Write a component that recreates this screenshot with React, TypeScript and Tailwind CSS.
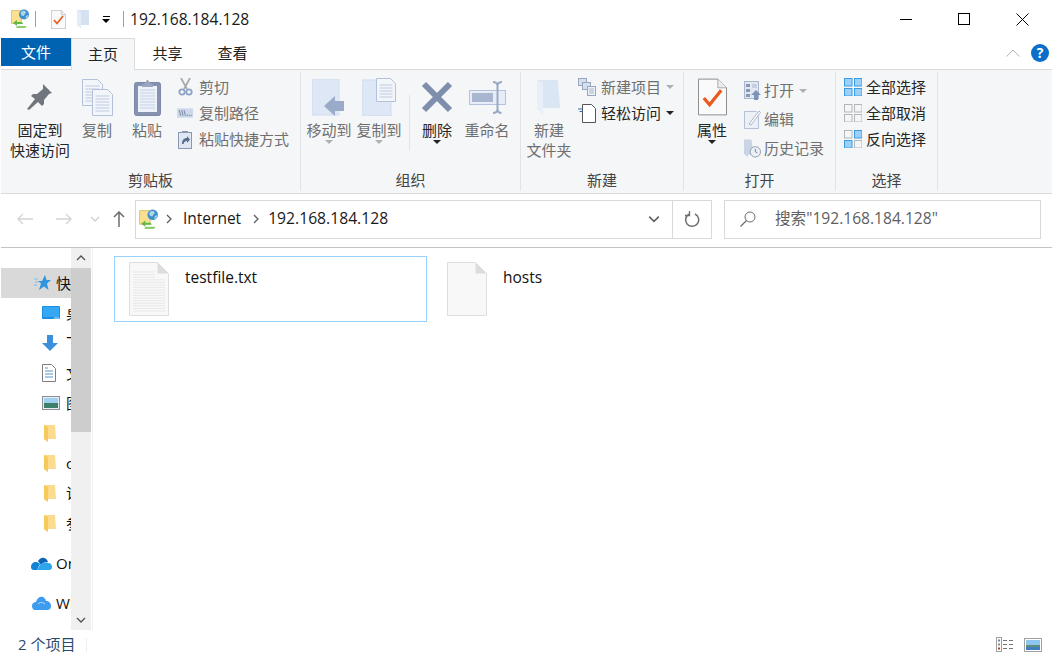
import React from "react";

const NetIcon = ({ s = 20 }: { s?: number }) => (
  <svg width={s} height={s} viewBox="0 0 20 20" className="shrink-0">
    <path d="M1.5 1.5h9l1 1v12h-10z" fill="#fbe08f" stroke="#d9bd6a" strokeWidth="0.8" />
    <circle cx="14" cy="5.5" r="5" fill="#3f8fc9" />
    <path d="M11 3c2-2 4-1 5 0 0 2-2 2-2 4-2 0-4-1-3-4z" fill="#a9d6ea" />
    <path d="M16 7c1-1 2-1 2.500-1-.5 2-2 3.500-3 3.500z" fill="#a9d6ea" />
    <path d="M3 14l4-3v2h5l1 2H7v2z" fill="#63b84a" />
    <path d="M7 17h10l-2 2H6z" fill="#8ccf6e" />
  </svg>
);
const Check = ({ w, h }: { w: number; h: number }) => (
  <svg width={w} height={h} viewBox="0 0 30 38" className="shrink-0">
    <path d="M.5.5h20l9 9v28H.5z" fill="#fafafa" stroke="#8a8a8a" />
    <path d="M20.500.5v9h9" fill="#ececec" stroke="#a8a8a8" />
    <path d="M6 20l6 7L24 12" fill="none" stroke="#ea5a1c" strokeWidth="3.400" />
  </svg>
);
const SmallFolder = ({ w = 13, h = 18 }: { w?: number; h?: number }) => (
  <svg width={w} height={h} viewBox="0 0 13 18" className="shrink-0">
    <path d="M0 0h12v15H4v3L0 15z" fill="#d6e2f2" />
    <path d="M0 0l4 2v16l-4-3z" fill="#e4ecf7" />
  </svg>
);
const Pin = () => (
  <svg width="28" height="28" viewBox="0 0 28 28">
    <path d="M17 1l9 9-3 1-5 6 0 4-2 2-4-4-9 8-2-1 8-10-4-3 2-2 4 0 6-5z" fill="#71757e" />
  </svg>
);
const Page = ({ x, y, w, h }: { x: number; y: number; w: number; h: number }) => (
  <g>
    <path d={`M${x} ${y}h${w - 5}l5 5v${h - 5}h-${w}z`} fill="#f2f5fa" stroke="#b3c2d9" />
    {Array.from({ length: Math.floor((h - 7) / 3) }).map((_, i) => (
      <path key={i} d={`M${x + 3} ${y + 6.5 + i * 3}h${w - 6}`} stroke="#bfcbe0" strokeWidth="1" />
    ))}
  </g>
);
const Copy = () => (
  <svg width="31" height="37" viewBox="0 0 31 37">
    <Page x={0.5} y={0.5} w={20} h={26} />
    <Page x={10.5} y={10.5} w={20} h={26} />
  </svg>
);
const Paste = () => (
  <svg width="27" height="37" viewBox="0 0 27 37">
    <rect x=".5" y="3.500" width="26" height="33" rx="2" fill="#8592b0" stroke="#7b88a8" />
    <rect x="4" y="7" width="19" height="26" fill="#edf2f9" />
    <path d="M6 11h15M6 14h15M6 17h15M6 20h15M6 23h15M6 26h15M6 29h15" stroke="#c5d1e6" />
    <path d="M8 6l3-2 2-3h1l2 3 3 2v2H8z" fill="#9aa6c1" />
  </svg>
);
const Scissors = () => (
  <svg width="15" height="18" viewBox="0 0 15 18" fill="none">
    <path d="M3 0l6 11M12 0L6 11" stroke="#a8a8a8" strokeWidth="1.700" />
    <circle cx="4" cy="14" r="2.700" stroke="#8fa3c4" strokeWidth="1.800" />
    <circle cx="11" cy="14" r="2.700" stroke="#8fa3c4" strokeWidth="1.800" />
  </svg>
);
const PathIcon = () => (
  <svg width="17" height="10" viewBox="0 0 17 10">
    <rect width="17" height="10" fill="#cdd8ea" />
    <path d="M2.500 2l1.500 6M5 2l1.500 6M7.500 2L9 8" stroke="#5c6b87" strokeWidth=".8" />
    <path d="M10.500 7.500h1M12.500 7.500h1M14.500 7.500h1" stroke="#5c6b87" />
  </svg>
);
const Shortcut = () => (
  <svg width="14" height="19" viewBox="0 0 14 19">
    <rect x=".5" y="2.500" width="13" height="16" fill="#dfe7f3" stroke="#8a98b5" />
    <path d="M4 2.500h6V1H4z" fill="#8a98b5" />
    <path d="M4 14c0-4 2-6 5-6V6l3 3.500L9 13v-2c-2 0-3 1-3.500 3z" fill="#5a6b8c" />
  </svg>
);
const MoveTo = () => (
  <svg width="34" height="37" viewBox="0 0 34 37">
    <path d="M0 0h27v36H0z" fill="#dde7f5" stroke="#cfdbee" />
    <path d="M12 27l11-10v5h9v10h-9v5z" fill="#99abc9" />
  </svg>
);
const CopyTo = () => (
  <svg width="34" height="38" viewBox="0 0 34 38">
    <path d="M0 2h29v36H0z" fill="#dde7f5" stroke="#cfdbee" />
    <g transform="translate(14 0)"><Page x={0.5} y={0.5} w={19} h={23} /></g>
  </svg>
);
const Del = () => (
  <svg width="32" height="32" viewBox="0 0 32 32">
    <path d="M3 3l26 26M29 3L3 29" stroke="#7f8ead" strokeWidth="6" />
  </svg>
);
const Rename = () => (
  <svg width="37" height="33" viewBox="0 0 37 33">
    <rect x=".5" y="9.500" width="36" height="14" fill="#e6edf7" stroke="#b3c3db" />
    <rect x="3" y="12" width="21" height="9" fill="#a8b7cf" />
    <path d="M24 1c3 0 4 1 4.500 3v25c.5 2 2 3 4 3M33 1c-3 0-4 1-4.500 3M28.500 29c-.5 2-2 3-4.500 3" fill="none" stroke="#9aa9c2" strokeWidth="2" />
  </svg>
);
const NewFolder = () => (
  <svg width="24" height="35" viewBox="0 0 24 35">
    <path d="M0 0h21l2 28H6v7L0 28z" fill="#dbe6f4" />
    <path d="M0 0l6 3v32l-6-7z" fill="#e9eff8" />
  </svg>
);
const NewItem = () => (
  <svg width="18" height="18" viewBox="0 0 18 18">
    <rect x=".5" y=".5" width="8" height="7" fill="#d5dfee" stroke="#98a7bf" />
    <rect x="4.500" y="4.500" width="8" height="7" fill="#d5dfee" stroke="#98a7bf" />
    <rect x="9.500" y="8.500" width="8" height="9" fill="#eef2f8" stroke="#98a7bf" />
    <path d="M11 11h5M11 13h5M11 15h5" stroke="#a8b6cc" />
  </svg>
);
const EasyAccess = () => (
  <svg width="18" height="19" viewBox="0 0 18 19">
    <path d="M4.500.5h9l4 4v14h-13z" fill="#fff" stroke="#555" />
    <path d="M0 5h4M1.500 7.500h3" stroke="#2a6fb5" />
  </svg>
);
const OpenI = () => (
  <svg width="17" height="19" viewBox="0 0 17 19">
    <rect x=".5" y=".5" width="14" height="17" fill="#e2e8f2" stroke="#aab7cc" />
    <rect x="2" y="3" width="4" height="3" fill="#8a99b3" /><rect x="2" y="8" width="4" height="3" fill="#8a99b3" /><rect x="2" y="13" width="4" height="3" fill="#8a99b3" />
    <path d="M8 4h5M8 6h5" stroke="#aab7cc" />
    <path d="M12 9l5 5h-3v5h-4v-5H7z" fill="#7c93b8" />
  </svg>
);
const EditI = () => (
  <svg width="17" height="19" viewBox="0 0 17 19">
    <path d="M.5 1.500h12l2 2v15H.5z" fill="#edf1f7" stroke="#b5c1d4" />
    <path d="M5 14L15 1l1.500 1.500L7 15z" fill="#fff" stroke="#a8b6cc" />
  </svg>
);
const HistI = () => (
  <svg width="18" height="19" viewBox="0 0 18 19">
    <path d="M0 0h8l2 16H4v3l-4-4z" fill="#c9d4e6" />
    <circle cx="12" cy="13" r="5.500" fill="#eceff4" stroke="#8d9ab0" />
    <path d="M12 10v3l2 1" fill="none" stroke="#6d7a90" />
  </svg>
);
const SelGrid = ({ on }: { on: boolean[] }) => (
  <svg width="18" height="18" viewBox="0 0 18 18">
    {[[0, 0], [10, 0], [0, 10], [10, 10]].map(([x, y], i) => (
      <rect key={i} x={x + 0.5} y={y + 0.5} width="7.500" height="7.500" fill={on[i] ? "#9dd0f7" : "#f5f6f7"} stroke={on[i] ? "#3a9ce4" : "#b5b5b5"} />
    ))}
  </svg>
);
const Caret = ({ c = "#a0a0a0" }: { c?: string }) => (
  <svg width="8" height="4" viewBox="0 0 8 4" className="shrink-0"><path d="M0 0h8L4 4z" fill={c} /></svg>
);

const Large = ({ icon, lines, w, dim = true, caret }: { icon: React.ReactNode; lines: string[]; w: number; dim?: boolean; caret?: string }) => (
  <div className="flex flex-col items-center shrink-0" style={{ width: w }}>
    <div className="flex items-center justify-center h-[46px]">{icon}</div>
    {lines.map((l) => (
      <div key={l} className={`h-5 leading-5 whitespace-nowrap ${dim ? "text-[#6f6f6f]" : "text-[#262626]"}`}>{l}</div>
    ))}
    {caret && <Caret c={caret} />}
  </div>
);
const Small = ({ icon, text, dim = true, h = 26, iw, gap, caret }: { icon: React.ReactNode; text: string; dim?: boolean; h?: number; iw: number; gap: number; caret?: string }) => (
  <div className="flex items-center whitespace-nowrap" style={{ height: h }}>
    <div className="flex items-center justify-center shrink-0" style={{ width: iw, marginRight: gap }}>{icon}</div>
    <span className={dim ? "text-[#6f6f6f]" : "text-[#262626]"}>{text}</span>
    {caret && <span className="ml-[5px]"><Caret c={caret} /></span>}
  </div>
);
const Group = ({ w, label, children }: { w: number; label: string; children: React.ReactNode }) => (
  <div className="flex flex-col border-r border-[#e1e3e6] shrink-0 my-[2px]" style={{ width: w }}>
    <div className="flex flex-1 pt-[2px] min-h-0">{children}</div>
    <div className="h-[22px] leading-[22px] text-center text-[#444]">{label}</div>
  </div>
);

const Chevron = ({ d, c = "#5f5f5f", s = 10 }: { d: string; c?: string; s?: number }) => (
  <svg width={s} height={s} viewBox="0 0 10 10" fill="none" className="shrink-0"><path d={d} stroke={c} strokeWidth="1.300" /></svg>
);
const Arrow = ({ flip, c }: { flip?: boolean; c: string }) => (
  <svg width="16" height="12" viewBox="0 0 16 12" fill="none" className={flip ? "rotate-180" : ""}>
    <path d="M1 6h15M6 1L1 6l5 5" stroke={c} strokeWidth="1.300" />
  </svg>
);

const NavRow = ({ icon, text, active, left = 41, iw = 24 }: { icon?: React.ReactNode; text?: string; active?: boolean; left?: number; iw?: number }) => (
  <div className={`h-[30px] flex items-center whitespace-nowrap shrink-0 ${active ? "bg-[#d9d9d9]" : ""}`} style={{ paddingLeft: left }}>
    <div className="shrink-0 flex items-center" style={{ width: iw }}>{icon}</div>
    <span className="text-[#111]">{text}</span>
  </div>
);
const NavFolder = () => (
  <svg width="12" height="17" viewBox="0 0 12 17">
    <path d="M0 0h11l1 14H4v3l-4-3z" fill="#fbdc8e" />
    <path d="M0 0l4 2v15l-4-3z" fill="#f5c95c" />
  </svg>
);
const Star = () => (
  <svg width="17" height="16" viewBox="0 0 17 16">
    <path d="M11 0l1.500 5H17l-4 3.500L14.500 15 10 11.500 5 15l2-6.500L4 6h4z" fill="#2f95dc" />
    <path d="M0 4h4M1 7h3M0 10h3" stroke="#7cc0ee" />
  </svg>
);
const Desktop = () => (
  <svg width="18" height="14" viewBox="0 0 18 14"><rect width="18" height="13" rx="1" fill="#1c8fe3" /><rect x="1" y="1" width="16" height="10" fill="#35a8f5" /><path d="M12 12h5" stroke="#cbe6fa" /></svg>
);
const Down = () => (
  <svg width="16" height="16" viewBox="0 0 16 16"><path d="M5 0h6v8h5l-8 8-8-8h5z" fill="#3b8fdd" /></svg>
);
const Doc = () => (
  <svg width="14" height="18" viewBox="0 0 14 18"><path d="M.5.5h9l4 4v13H.5z" fill="#fff" stroke="#7d7d7d" /><path d="M3 4h3M3 7h8M3 10h8M3 13h8" stroke="#5a93c9" /></svg>
);
const Pic = () => (
  <svg width="18" height="14" viewBox="0 0 18 14"><rect x=".5" y=".5" width="17" height="13" fill="#e6eef8" stroke="#8f8f8f" /><rect x="2" y="2" width="14" height="5" fill="#9fd0f0" /><rect x="2" y="7" width="14" height="5" fill="#3e7f6a" /></svg>
);
const OneDrive = () => (
  <svg width="21" height="13" viewBox="0 0 21 13"><path d="M7 4c2-4 8-5 10 1-4 0-6 1-7 3z" fill="#0a64b8" /><path d="M0 10c0-3 2-5 5-5 2 0 3 1 4 2l-3 6H3c-2 0-3-1-3-3z" fill="#1284d8" /><path d="M6 13l3-5c2-2 5-3 8-2 3 0 4 2 4 4 0 2-1 3-3 3z" fill="#2ea6ec" /></svg>
);
const Wps = () => (
  <svg width="19" height="14" viewBox="0 0 19 14"><path d="M0 10c0-3 2-4 4-4 1-4 4-6 7-5 2 1 3 3 3 4 3 0 5 2 5 5s-2 4-4 4H3c-2 0-3-2-3-4z" fill="#3d9bf0" /><path d="M6 8c2-2 5-2 7 0" stroke="#bfe0fb" fill="none" /></svg>
);
const FileIcon = ({ lines }: { lines?: boolean }) => (
  <svg width="40" height="54" viewBox="0 0 40 54" className="shrink-0">
    <path d="M.5.5h28l11 11v42H.5z" fill="#f8f8f9" stroke="#dedede" />
    <path d="M28.500.5v11h11z" fill="#dcdcdc" />
    {lines && Array.from({ length: 16 }).map((_, i) => <path key={i} d={`M4 ${10 + i * 2.6}h${i < 3 ? 22 : 32}`} stroke="#e8e8e8" />)}
  </svg>
);

const FileItem = ({ text, selected, lines }: { text: string; selected?: boolean; lines?: boolean }) => (
  <div className={`w-[313px] h-[66px] border flex items-start pl-[14px] pt-[5px] shrink-0 ${selected ? "border-[#99d1ff]" : "border-transparent"}`}>
    <FileIcon lines={lines} />
    <span className="ml-4 mt-[4px] text-[15.500px] leading-[22px] text-[#111]">{text}</span>
  </div>
);

export default function App() {
  return (
    <div className="w-[1053px] h-[659px] overflow-hidden bg-white flex flex-col text-[15px] px-px text-[#222] [font-family:'Open_Sans','Noto_Sans_CJK_SC',sans-serif]">
      {/* title bar */}
      <div className="h-[38px] flex items-center shrink-0">
        <div className="ml-[9px]"><NetIcon /></div>
        <div className="ml-[5px] w-px h-4 bg-[#a0a0a0]" />
        <div className="ml-[15px]"><Check w={15} h={19} /></div>
        <div className="ml-[11px]"><SmallFolder /></div>
        <div className="ml-[12px] flex flex-col items-center gap-[2px]"><div className="w-[7px] h-px bg-black" /><Caret c="#000" /></div>
        <div className="ml-[13px] w-px h-4 bg-[#a0a0a0]" />
        <div className="ml-[6px] pt-px text-[15.600px] text-[#1a1a1a]">192.168.184.128</div>
        <div className="ml-auto flex items-center mr-px">
          <div className="w-[58px] flex justify-center"><div className="w-3 h-px bg-black" /></div>
          <div className="w-[58px] flex justify-center"><div className="w-3 h-3 border border-black" /></div>
          <div className="w-[58px] flex justify-center">
            <svg width="13" height="13" viewBox="0 0 13 13"><path d="M.5.5l12 12M12.500.5l-12 12" stroke="#000" /></svg>
          </div>
        </div>
      </div>
      {/* tabs */}
      <div className="h-[32px] flex shrink-0 border-b border-[#dadbdc] relative">
        <div className="w-[70px] h-[28px] bg-[#0063b1] text-white text-center leading-[28px]">文件</div>
        <div className="w-[64px] h-[32px] bg-[#f5f6f7] border border-b-0 border-[#dadbdc] text-center leading-[30px] text-[#222]">主页</div>
        <div className="w-[65px] text-center leading-[30px]">共享</div>
        <div className="w-[65px] text-center leading-[30px]">查看</div>
        <div className="ml-auto flex items-center h-[30px] pr-[3px]">
          <svg width="14" height="8" viewBox="0 0 14 8" fill="none"><path d="M.5 7.500L7 1l6.500 6.500" stroke="#b5b5b5" /></svg>
          <div className="ml-[11px] w-[18px] h-[18px] rounded-full bg-[#0b6fc9] text-white text-[14px] font-bold text-center leading-[18px]">?</div>
        </div>
      </div>
      {/* ribbon */}
      <div className="h-[124px] flex bg-[#f5f6f7] border-b border-[#dadbdc] shrink-0">
        <Group w={300} label="剪贴板">
          <div className="pl-[9px] flex">
            <Large w={60} dim={false} icon={<Pin />} lines={["固定到", "快速访问"]} />
            <div className="w-[7px]" />
            <Large w={40} icon={<Copy />} lines={["复制"]} />
            <div className="w-[10px]" />
            <Large w={40} icon={<Paste />} lines={["粘贴"]} />
          </div>
          <div className="ml-[10px] flex flex-col">
            <Small icon={<Scissors />} text="剪切" iw={16} gap={6} />
            <Small icon={<PathIcon />} text="复制路径" iw={16} gap={6} />
            <Small icon={<Shortcut />} text="粘贴快捷方式" iw={16} gap={6} />
          </div>
        </Group>
        <Group w={220} label="组织">
          <div className="pl-[3px] flex">
            <Large w={50} icon={<MoveTo />} lines={["移动到"]} caret="#b0b0b0" />
            <Large w={50} icon={<CopyTo />} lines={["复制到"]} caret="#b0b0b0" />
            <div className="mx-[5px] mt-[21px] w-px h-[56px] bg-[#e1e3e6]" />
            <Large w={44} dim={false} icon={<Del />} lines={["删除"]} caret="#222" />
            <div className="w-[3px]" />
            <Large w={50} icon={<Rename />} lines={["重命名"]} />
          </div>
        </Group>
        <Group w={163} label="新建">
          <div className="pl-[5px] flex">
            <Large w={46} icon={<NewFolder />} lines={["新建", "文件夹"]} />
            <div className="ml-[6px] flex flex-col">
              <Small icon={<NewItem />} text="新建项目" iw={18} gap={5} caret="#b0b0b0" />
              <Small icon={<EasyAccess />} text="轻松访问" dim={false} iw={18} gap={5} caret="#222" />
            </div>
          </div>
        </Group>
        <Group w={152} label="打开">
          <div className="pl-[5px] flex">
            <Large w={46} dim={false} icon={<Check w={29} h={38} />} lines={["属性"]} caret="#222" />
            <div className="ml-[9px] flex flex-col pt-[2px]">
              <Small icon={<OpenI />} text="打开" h={29} iw={17} gap={3} caret="#b0b0b0" />
              <Small icon={<EditI />} text="编辑" h={29} iw={17} gap={3} />
              <Small icon={<HistI />} text="历史记录" h={29} iw={17} gap={3} />
            </div>
          </div>
        </Group>
        <Group w={102} label="选择">
          <div className="pl-[8px] flex flex-col">
            <Small icon={<SelGrid on={[true, true, true, true]} />} text="全部选择" dim={false} iw={18} gap={4} />
            <Small icon={<SelGrid on={[false, false, false, false]} />} text="全部取消" dim={false} iw={18} gap={4} />
            <Small icon={<SelGrid on={[false, true, true, false]} />} text="反向选择" dim={false} iw={18} gap={4} />
          </div>
        </Group>
      </div>
      {/* nav */}
      <div className="h-[54px] flex items-center shrink-0 border-b border-[#c4c4c4] pb-[3px]">
        <div className="w-[134px] flex items-center shrink-0">
          <div className="ml-[16px]"><Arrow c="#d4d4d4" /></div>
          <div className="ml-[23px]"><Arrow flip c="#d4d4d4" /></div>
          <div className="ml-[18px]"><Chevron d="M1 3l4 4 4-4" c="#d0d0d0" /></div>
          <svg width="12" height="16" viewBox="0 0 12 16" fill="none" className="ml-[13px]"><path d="M6 16V1M1 6l5-5 5 5" stroke="#6d6d6d" strokeWidth="1.500" /></svg>
        </div>
        <div className="w-[577px] h-[39px] border border-[#d9d9d9] flex items-center shrink-0">
          <div className="ml-[2px]"><NetIcon s={21} /></div>
          <div className="ml-[5px]"><Chevron d="M3 1l4 4-4 4" /></div>
          <span className="ml-[9px] text-[15.500px] text-[#1a1a1a]">Internet</span>
          <div className="ml-[10px]"><Chevron d="M3 1l4 4-4 4" /></div>
          <span className="ml-[7px] text-[15.700px] text-[#1a1a1a]">192.168.184.128</span>
          <div className="ml-auto mr-[12px]"><Chevron s={12} d="M1 3l4 4 4-4" c="#5f5f5f" /></div>
          <div className="w-[39px] h-full border-l border-[#d9d9d9] flex items-center justify-center">
            <svg width="16" height="17" viewBox="0 0 16 17" fill="none"><path d="M5 3.200A6.500 6.500 0 1 0 11 3" stroke="#6d6d6d" strokeWidth="1.500" /><path d="M5.500 0v4.500H1" stroke="#6d6d6d" strokeWidth="1.300" /></svg>
          </div>
        </div>
        <div className="ml-[12px] w-[317px] h-[39px] border border-[#d9d9d9] flex items-center shrink-0">
          <svg width="16" height="16" viewBox="0 0 16 16" fill="none" className="ml-[15px]"><circle cx="10" cy="6" r="5" stroke="#6d6d6d" /><path d="M6.500 9.500L.5 15.500" stroke="#6d6d6d" strokeWidth="1.200" /></svg>
          <span className="ml-[19px] text-[#5f5f5f] text-[15.600px]">搜索"192.168.184.128"</span>
        </div>
      </div>
      {/* body */}
      <div className="flex-1 flex min-h-0">
        <div className="w-[92px] flex shrink-0 border-r border-[#f0f0f0]">
          <div className="w-[70px] overflow-hidden pt-[20px] flex flex-col shrink-0">
            <NavRow active left={33} iw={22} icon={<Star />} text="快速访问" />
            <NavRow icon={<Desktop />} text="桌面" />
            <NavRow icon={<Down />} text="下载" />
            <NavRow icon={<Doc />} text="文档" />
            <NavRow icon={<Pic />} text="图片" />
            <NavRow left={43} iw={22} icon={<NavFolder />} text="" />
            <NavRow left={43} iw={22} icon={<NavFolder />} text="code" />
            <NavRow left={43} iw={22} icon={<NavFolder />} text="论文" />
            <NavRow left={43} iw={22} icon={<NavFolder />} text="参考" />
            <div className="h-[10px] shrink-0" />
            <NavRow left={30} iw={25} icon={<OneDrive />} text="OneDrive" />
            <div className="h-[10px] shrink-0" />
            <NavRow left={31} iw={24} icon={<Wps />} text="WPS网盘" />
          </div>
          <div className="w-[20px] bg-[#f0f0f0] flex flex-col items-center shrink-0 h-[382px]">
            <div className="h-[20px] flex items-center justify-center"><Chevron d="M1 7l4-4 4 4" c="#505050" /></div>
            <div className="h-[164px] w-full bg-[#cdcdcd]" />
            <div className="mt-auto h-[20px] flex items-center justify-center"><Chevron d="M1 3l4 4 4-4" c="#505050" /></div>
          </div>
        </div>
        <div className="flex-1 pl-[21px] pt-[8px] flex gap-[5px] items-start">
          <FileItem text="testfile.txt" selected lines />
          <FileItem text="hosts" />
        </div>
      </div>
      {/* status */}
      <div className="h-[29px] flex items-center shrink-0 pl-[17px] pr-[10px]">
        <span className="text-[#2b4a6f] text-[15px]">2 个项目</span>
        <div className="ml-[11px] w-px h-[14px] bg-[#eeeeee]" />
        <div className="ml-auto flex items-center gap-[10px]">
          <svg width="18" height="15" viewBox="0 0 18 15">
            <rect x=".5" y=".5" width="5" height="14" fill="#fff" stroke="#a0a0a0" />
            <rect x="2" y="2.500" width="2" height="2" fill="#5a8fb0" /><rect x="2" y="6.500" width="2" height="2" fill="#7a9a60" /><rect x="2" y="10.500" width="2" height="2" fill="#c03a2a" />
            <path d="M7 3.500h4M13 3.500h4M7 7.500h4M13 7.500h4M7 11.500h4M13 11.500h4" stroke="#777" />
          </svg>
          <svg width="18" height="14" viewBox="0 0 18 14">
            <rect x=".5" y=".5" width="17" height="13" fill="#fff" stroke="#a0a0a0" />
            <rect x="2" y="2" width="14" height="5" fill="#8fc6ee" /><rect x="2" y="7" width="14" height="2" fill="#5e8f78" /><rect x="2" y="9" width="14" height="3" fill="#3f7fc4" />
          </svg>
        </div>
      </div>
    </div>
  );
}
